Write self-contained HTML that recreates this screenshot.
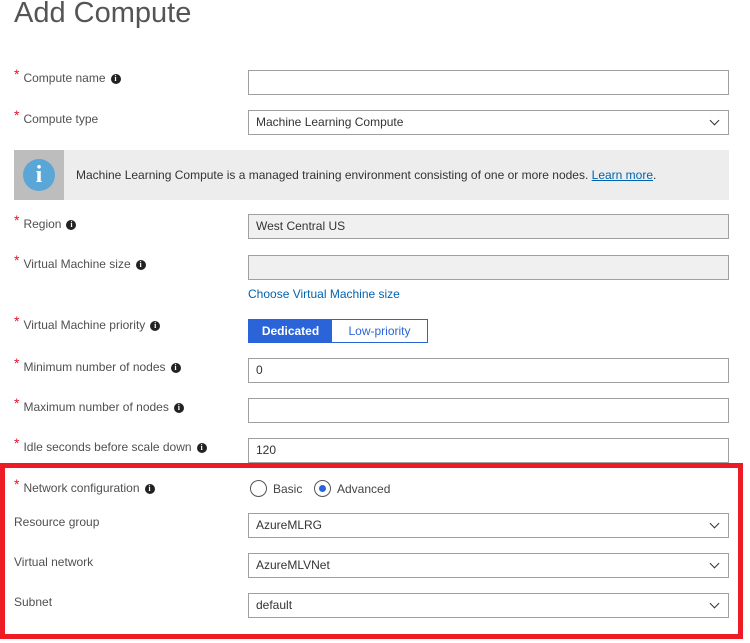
<!DOCTYPE html>
<html><head><style>
body{margin:0;width:750px;height:643px;background:#fff;font-family:"Liberation Sans",sans-serif;position:relative;overflow:hidden;color:#444}
.t{position:absolute;left:14px;top:-3px;font-size:29px;color:#555;font-weight:300}
.l{position:absolute;left:14px;font-size:12px;color:#505050;white-space:nowrap}
.l .s{color:#e81123;font-size:14px;position:relative;top:-3px;margin-right:4px}
.i{display:inline-block;width:10px;height:10px;border-radius:50%;background:#222;color:#fff;font-size:8px;line-height:10px;text-align:center;font-weight:bold;font-family:"Liberation Serif",serif;margin-left:5px;vertical-align:1px}
.f{position:absolute;left:248px;height:23px;border:1px solid #a0a0a0;font-size:12px;line-height:23px;padding-left:7px;box-sizing:content-box;width:472px;color:#333}
.g{background:#f0f0f0}
.dd::after{content:"";position:absolute;right:10px;top:6px;width:6px;height:6px;border-right:1.3px solid #333;border-bottom:1.3px solid #333;transform:rotate(45deg)}
</style></head><body>
<div class="t">Add Compute</div>
<div class="l" style="top:69px"><span class="s">*</span>Compute name<span class="i">i</span></div>
<div class="f" style="top:70px"></div>
<div class="l" style="top:110px"><span class="s">*</span>Compute type</div>
<div class="f dd" style="top:110px">Machine Learning Compute</div>
<div style="position:absolute;left:14px;top:150px;width:715px;height:50px;background:#ededed"></div>
<div style="position:absolute;left:14px;top:150px;width:50px;height:50px;background:#bdbdbd"></div>
<div style="position:absolute;left:23px;top:159px;width:32px;height:32px;border-radius:50%;background:#5aa6d6;color:#fff;font-family:'Liberation Serif',serif;font-weight:bold;font-size:24px;text-align:center;line-height:32px">i</div>
<div style="position:absolute;left:76px;top:168px;font-size:12px;color:#333">Machine Learning Compute is a managed training environment consisting of one or more nodes. <span style="color:#0063b1;text-decoration:underline">Learn more</span>.</div>
<div class="l" style="top:215px"><span class="s">*</span>Region<span class="i">i</span></div>
<div class="f g" style="top:214px">West Central US</div>
<div class="l" style="top:255px"><span class="s">*</span>Virtual Machine size<span class="i">i</span></div>
<div class="f g" style="top:255px"></div>
<div style="position:absolute;left:248px;top:287px;font-size:12px;color:#0063b1">Choose Virtual Machine size</div>
<div class="l" style="top:316px"><span class="s">*</span>Virtual Machine priority<span class="i">i</span></div>
<div style="position:absolute;left:248px;top:319px;width:178px;height:22px;border:1px solid #2b64d9;font-size:12px;line-height:22px">
<div style="position:absolute;left:0;top:0;width:83px;height:22px;background:#2b64d9;color:#fff;text-align:center;font-weight:bold">Dedicated</div>
<div style="position:absolute;left:83px;top:0;width:95px;text-align:center;color:#2b64d9">Low-priority</div></div>
<div class="l" style="top:358px"><span class="s">*</span>Minimum number of nodes<span class="i">i</span></div>
<div class="f" style="top:358px">0</div>
<div class="l" style="top:398px"><span class="s">*</span>Maximum number of nodes<span class="i">i</span></div>
<div class="f" style="top:398px"></div>
<div class="l" style="top:438px"><span class="s">*</span>Idle seconds before scale down<span class="i">i</span></div>
<div class="f" style="top:438px">120</div>
<div style="position:absolute;left:0;top:463px;width:743px;height:176px;border:5px solid #ed1c24;box-sizing:border-box"></div>
<div class="l" style="top:479px"><span class="s">*</span>Network configuration<span class="i">i</span></div>
<div style="position:absolute;left:250px;top:480px;width:15px;height:15px;border:1px solid #555;border-radius:50%"></div>
<div style="position:absolute;left:273px;top:482px;font-size:12px">Basic</div>
<div style="position:absolute;left:314px;top:480px;width:15px;height:15px;border:1px solid #555;border-radius:50%"><div style="position:absolute;left:4px;top:4px;width:7px;height:7px;border-radius:50%;background:#2b64d9"></div></div>
<div style="position:absolute;left:337px;top:482px;font-size:12px">Advanced</div>
<div class="l" style="top:515px">Resource group</div>
<div class="f dd" style="top:513px">AzureMLRG</div>
<div class="l" style="top:555px">Virtual network</div>
<div class="f dd" style="top:553px">AzureMLVNet</div>
<div class="l" style="top:595px">Subnet</div>
<div class="f dd" style="top:593px">default</div>
</body></html>
